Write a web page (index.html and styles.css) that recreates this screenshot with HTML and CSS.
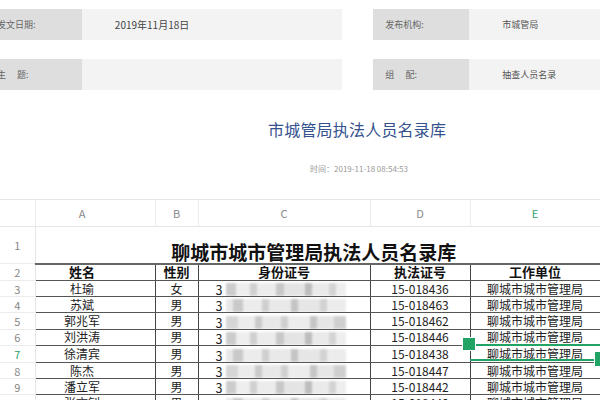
FILE: index.html
```html
<!DOCTYPE html>
<html lang="zh-CN">
<head>
    <meta charset="UTF-8">
    <title>市城管局执法人员名录库</title>
    <link rel="stylesheet" href="styles.css">
</head>
<body>
    <div class="meta">
        <div class="meta-row">
            <div class="label first">发文日期:</div>
            <div class="value date">2019年11月18日</div>
            <div class="label">发布机构:</div>
            <div class="value">市城管局</div>
        </div>
        <div class="meta-row">
            <div class="label first">主　&nbsp;题:</div>
            <div class="value date"></div>
            <div class="label">组　&nbsp;配:</div>
            <div class="value">抽查人员名录</div>
        </div>
    </div>

    <h1 class="title">市城管局执法人员名录库</h1>
    <p class="time">时间：2019-11-18 08:54:53</p>

    <div class="sheet">
        <table>
            <colgroup>
                <col class="c-num">
                <col class="c-a">
                <col class="c-b">
                <col class="c-c">
                <col class="c-d">
                <col class="c-e">
            </colgroup>
            <tr class="letters">
                <td class="num"></td>
                <td class="col-a">A</td>
                <td>B</td>
                <td>C</td>
                <td>D</td>
                <td class="active">E</td>
            </tr>
            <tr class="r1">
                <td class="num">1</td>
                <td colspan="5" class="big">聊城市城市管理局执法人员名录库</td>
            </tr>
            <tr class="r2 data">
                <td class="num">2</td>
                <td class="col-a">姓名</td>
                <td>性别</td>
                <td>身份证号</td>
                <td>执法证号</td>
                <td>工作单位</td>
            </tr>
            <tr class="data">
                <td class="num">3</td>
                <td class="col-a">杜瑜</td>
                <td>女</td>
                <td class="id"><span class="three">3</span><span class="blur b1"></span></td>
                <td>15-018436</td>
                <td>聊城市城市管理局</td>
            </tr>
            <tr class="data">
                <td class="num">4</td>
                <td class="col-a">苏斌</td>
                <td>男</td>
                <td class="id"><span class="three">3</span><span class="blur b2"></span></td>
                <td>15-018463</td>
                <td>聊城市城市管理局</td>
            </tr>
            <tr class="data">
                <td class="num">5</td>
                <td class="col-a">郭兆军</td>
                <td>男</td>
                <td class="id"><span class="three">3</span><span class="blur b3"></span></td>
                <td>15-018462</td>
                <td>聊城市城市管理局</td>
            </tr>
            <tr class="data">
                <td class="num">6</td>
                <td class="col-a">刘洪涛</td>
                <td>男</td>
                <td class="id"><span class="three">3</span><span class="blur b1"></span></td>
                <td>15-018446</td>
                <td>聊城市城市管理局</td>
            </tr>
            <tr class="data tall">
                <td class="num active">7</td>
                <td class="col-a">徐清宾</td>
                <td>男</td>
                <td class="id"><span class="three">3</span><span class="blur b2"></span></td>
                <td>15-018438</td>
                <td>聊城市城市管理局</td>
            </tr>
            <tr class="data">
                <td class="num">8</td>
                <td class="col-a">陈杰</td>
                <td>男</td>
                <td class="id"><span class="three">3</span><span class="blur b3"></span></td>
                <td>15-018447</td>
                <td>聊城市城市管理局</td>
            </tr>
            <tr class="data">
                <td class="num">9</td>
                <td class="col-a">潘立军</td>
                <td>男</td>
                <td class="id"><span class="three">3</span><span class="blur b1"></span></td>
                <td>15-018442</td>
                <td>聊城市城市管理局</td>
            </tr>
            <tr class="data">
                <td class="num">10</td>
                <td class="col-a">张文钊</td>
                <td>男</td>
                <td class="id"><span class="three">3</span><span class="blur b2"></span></td>
                <td>15-018440</td>
                <td>聊城市城市管理局</td>
            </tr>
        </table>
        <!-- 选中单元格的绿框和拖动柄 -->
        <div class="sel"></div>
        <div class="handle left"></div>
        <div class="handle right"></div>
    </div>
</body>
</html>
```

FILE: styles.css
```css
* {
    margin: 0;
    padding: 0;
    box-sizing: border-box;
}

body {
    width: 600px;
    height: 400px;
    overflow: hidden;
    background: #fff;
    font-family: "Noto Sans CJK SC", "Liberation Sans", sans-serif;
    color: #333;
}

/* 顶部信息栏 */
.meta {
    padding-top: 9px;
}

.meta-row {
    display: flex;
    height: 31px;
    margin-bottom: 19px;
}

.meta .label {
    width: 96px;
    background: #dedede;
    color: #666;
    font-size: 9px;
    line-height: 31px;
    padding-left: 12px;
    white-space: nowrap;
}

.meta .label.first {
    width: 82px;
    padding-left: 0;
    text-indent: -3px;
}

.meta .value {
    width: 131px;
    background: #f3f3f3;
    color: #555;
    font-size: 9px;
    line-height: 31px;
    padding-left: 33px;
}

.meta .value.date {
    width: 261px;
    margin-right: 31px;
    font-size: 10px;
    color: #444;
}

/* 标题 */
.title {
    margin-top: 29px;
    margin-left: 268px;
    font-size: 16px;
    line-height: 20px;
    font-weight: normal;
    color: #34528e;
    letter-spacing: 0.2px;
}

.time {
    margin-top: 25px;
    margin-left: 310px;
    font-size: 8px;
    line-height: 10px;
    color: #999;
}

/* 表格 */
.sheet {
    position: relative;
    margin-top: 25px;
}

table {
    width: 600px;
    table-layout: fixed;
    border-collapse: collapse;
}

.c-num { width: 35px; }
.c-a { width: 120px; }
.c-b { width: 43px; }
.c-c { width: 172px; }
.c-d { width: 100px; }
.c-e { width: 130px; }

td {
    padding: 0;
    text-align: center;
    white-space: nowrap;
    overflow: hidden;
}

.letters td {
    height: 27px;
    border-top: 1px solid #e6e6e6;
    border-bottom: 1px solid #e6e6e6;
    border-right: 1px solid #ececec;
    font-size: 11px;
    color: #888;
}

.letters .col-a,
.data .col-a {
    padding-right: 26px;
}

.num {
    font-size: 11px;
    color: #888;
    border-right: 1px solid #e6e6e6;
    border-bottom: 1px solid #ececec;
}

.active {
    color: #2e9e6e !important;
}

.r1 td {
    height: 37px;
}

.r1 .big {
    font-size: 19px;
    font-weight: bold;
    color: #111;
    vertical-align: bottom;
    line-height: 23px;
    padding-right: 8px;
    border-bottom: 2px solid #666;
}

.data td {
    height: 16px;
    font-size: 12px;
    line-height: 14px;
    color: #222;
}

.data td:not(.num) {
    border-bottom: 1.5px solid #555;
    border-right: 1.5px solid #444;
}

.data.tall td {
    height: 17px;
}

.r2 td:not(.num) {
    font-weight: bold;
    font-size: 13px;
    color: #111;
}

.r2 td {
    height: 17px;
}

.data .num {
    font-size: 11px;
    color: #888;
}

.id {
    text-align: left !important;
    padding-left: 17px !important;
}

.three {
    display: inline-block;
    width: 10px;
    font-size: 12.5px;
    line-height: 13px;
    height: 13px;
    vertical-align: middle;
}

.blur {
    display: inline-block;
    width: 120px;
    height: 13px;
    vertical-align: middle;
    filter: blur(1.2px);
    background-color: #e6e6e6;
}

.b1 {
    background-image:
        linear-gradient(90deg, #ccc 0 8%, #eee 8% 20%, #d0d0d0 20% 26%, #ececec 26% 42%, #c8c8c8 42% 48%, #e4e4e4 48% 66%, #bdbdbd 66% 72%, #eaeaea 72% 86%, #d4d4d4 86% 92%, #eee 92%);
}

.b2 {
    background-image:
        linear-gradient(90deg, #e8e8e8 0 6%, #c9c9c9 6% 14%, #ececec 14% 30%, #cfcfcf 30% 36%, #e9e9e9 36% 54%, #c4c4c4 54% 60%, #e6e6e6 60% 78%, #d2d2d2 78% 84%, #ececec 84%);
}

.b3 {
    background-image:
        linear-gradient(90deg, #d6d6d6 0 10%, #ececec 10% 24%, #cacaca 24% 30%, #e8e8e8 30% 46%, #d0d0d0 46% 52%, #ededed 52% 70%, #c6c6c6 70% 76%, #e6e6e6 76% 90%, #cfcfcf 90%);
}

/* 选中框 */
.sel {
    position: absolute;
    left: 470px;
    top: 145px;
    width: 130px;
    height: 17px;
    border-top: 2px solid #21a366;
    border-bottom: 2px solid #21a366;
}

.handle {
    position: absolute;
    background: #21a366;
    border: 1px solid #fff;
}

.handle.left {
    left: 462px;
    top: 138px;
    width: 14px;
    height: 14px;
}

.handle.right {
    left: 594px;
    top: 152px;
    width: 10px;
    height: 16px;
}
```
